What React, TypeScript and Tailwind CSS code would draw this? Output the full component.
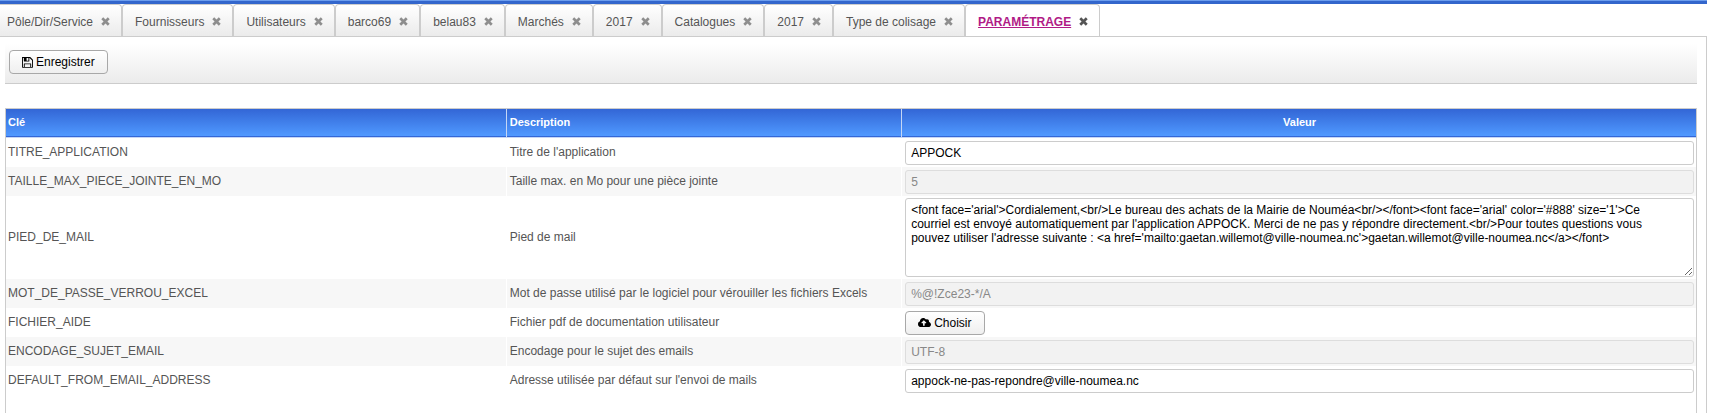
import { FaCloudUploadAlt } from 'react-icons/fa';

type Row = {
  key: string;
  description: string;
  kind: 'text' | 'disabled' | 'area' | 'file';
  value?: string;
};

const tabs = [
  'Pôle/Dir/Service',
  'Fournisseurs',
  'Utilisateurs',
  'barco69',
  'belau83',
  'Marchés',
  '2017',
  'Catalogues',
  '2017',
  'Type de colisage',
];

const footer =
  "<font face='arial'>Cordialement,<br/>Le bureau des achats de la Mairie de Nouméa<br/></font><font face='arial' color='#888' size='1'>Ce courriel est envoyé automatiquement par l'application APPOCK. Merci de ne pas y répondre directement.<br/>Pour toutes questions vous pouvez utiliser l'adresse suivante : <a href='mailto:gaetan.willemot@ville-noumea.nc'>gaetan.willemot@ville-noumea.nc</a></font>";

const rows: Row[] = [
  { key: 'TITRE_APPLICATION', description: "Titre de l'application", kind: 'text', value: 'APPOCK' },
  { key: 'TAILLE_MAX_PIECE_JOINTE_EN_MO', description: 'Taille max. en Mo pour une pièce jointe', kind: 'disabled', value: '5' },
  { key: 'PIED_DE_MAIL', description: 'Pied de mail', kind: 'area', value: footer },
  { key: 'MOT_DE_PASSE_VERROU_EXCEL', description: 'Mot de passe utilisé par le logiciel pour vérouiller les fichiers Excels', kind: 'disabled', value: '%@!Zce23-*/A' },
  { key: 'FICHIER_AIDE', description: 'Fichier pdf de documentation utilisateur', kind: 'file' },
  { key: 'ENCODAGE_SUJET_EMAIL', description: 'Encodage pour le sujet des emails', kind: 'disabled', value: 'UTF-8' },
  { key: 'DEFAULT_FROM_EMAIL_ADDRESS', description: "Adresse utilisée par défaut sur l'envoi de mails", kind: 'text', value: 'appock-ne-pas-repondre@ville-noumea.nc' },
];

const buttonClass =
  'flex h-6 items-center gap-[3px] rounded border border-[#a8a8a8] bg-linear-to-b from-white to-[#efefef] px-3 text-black';

function CloseIcon() {
  return (
    <svg viewBox="0 0 9 9" className="size-[9px] fill-current" aria-hidden="true">
      <path d="M2.2 0.3 4.5 2.5 6.8 0.3 8.7 2.2 6.4 4.5 8.7 6.8 6.8 8.7 4.5 6.5 2.2 8.7 0.3 6.8 2.6 4.5 0.3 2.2Z" />
    </svg>
  );
}

function FloppyIcon() {
  return (
    <svg viewBox="0 128 1536 1536" className="size-[11px] fill-current" aria-hidden="true">
      <path d="M384 1536h768v-384h-768v384zm896 0h128v-896q0-14-10-38.5t-20-34.5l-281-281q-10-10-34-20t-39-10v416q0 40-28 68t-68 28h-576q-40 0-68-28t-28-68v-416h-128v1280h128v-416q0-40 28-68t68-28h832q40 0 68 28t28 68v416zm-384-928v-320q0-13-9.5-22.5t-22.5-9.5h-192q-13 0-22.5 9.5t-9.5 22.5v320q0 13 9.5 22.5t22.5 9.5h192q13 0 22.5-9.5t9.5-22.5zm640 32v896q0 40-28 68t-68 28h-1344q-40 0-68-28t-28-68v-1344q0-40 28-68t68-28h928q40 0 88 20t76 48l280 280q28 28 48 76t20 88z" />
    </svg>
  );
}

function Tab({ label, active = false }: { label: string; active?: boolean }) {
  return (
    <li
      className={
        active
          ? 'flex h-[33px] shrink-0 items-center gap-2 rounded-t border border-b-0 border-[#ccc] bg-white pt-px pr-[11px] pl-3'
          : 'flex h-8 shrink-0 items-center gap-2 rounded-t border border-b-0 border-[#ccc] bg-linear-to-b from-white to-[#ebebeb] pt-[2px] pr-[11px] pl-3'
      }
    >
      <a href="#" className={active ? 'font-bold text-[#b01a86] underline' : 'text-[#555]'}>
        {label}
      </a>
      <button type="button" aria-label={'Fermer ' + label} className={active ? 'text-[#555]' : 'text-[#8e8e8e]'}>
        <CloseIcon />
      </button>
    </li>
  );
}

function Field({ row }: { row: Row }) {
  if (row.kind === 'area') {
    return (
      <textarea
        id={row.key}
        defaultValue={row.value}
        className="block h-[79px] w-full rounded-[3px] border border-[#ccc] bg-white py-1 pr-6 pl-[5px] leading-[14px] text-black"
      />
    );
  }
  if (row.kind === 'file') {
    return (
      <button id={row.key} type="button" className={buttonClass}>
        <FaCloudUploadAlt className="size-[13px]" />
        Choisir
      </button>
    );
  }
  return (
    <input
      id={row.key}
      type="text"
      defaultValue={row.value}
      disabled={row.kind === 'disabled'}
      className="block h-6 w-full rounded-[3px] border border-[#ccc] bg-white px-[5px] pt-px text-black disabled:border-[#ddd] disabled:bg-[#f2f2f2] disabled:text-[#888]"
    />
  );
}

export default function App() {
  return (
    <div className="flex min-h-screen flex-col overflow-hidden bg-white pr-[2px] font-['Liberation_Sans',Arial,sans-serif] text-xs text-[#555]">
      <div className="h-1 border-t border-[#6d9eee] bg-[#3366cc]" />
      <nav className="h-8">
        <ul className="-ml-[6px] flex">
          {tabs.map((label, i) => (
            <Tab key={i} label={label} />
          ))}
          <Tab label="PARAMÉTRAGE" active />
        </ul>
      </nav>
      <main className="flex grow flex-col border-t border-r border-[#ccc] pr-[9px] pl-[5px]">
        <div className="flex h-[47px] items-end border-b border-[#ccc] bg-linear-to-b from-white from-15% to-[#ebebeb] px-1 pb-[9px]">
          <button type="button" className={buttonClass}>
            <FloppyIcon />
            Enregistrer
          </button>
        </div>
        <div className="mt-6 grow border-x border-t border-[#ccc]">
          <table className="w-full table-fixed border-collapse">
            <colgroup>
              <col className="w-[29.6%]" />
              <col className="w-[23.4%]" />
              <col />
            </colgroup>
            <thead>
              <tr className="h-7 border-b border-[#c5d6f5] bg-linear-to-b from-[#3366d6] to-[#5099ff] text-[11px] text-white">
                <th className="px-[2px] text-left">Clé</th>
                <th className="border-l border-[#c5d6f5] pr-[2px] pl-[3px] text-left">Description</th>
                <th className="border-l border-[#c5d6f5] pr-[2px] pl-[3px] text-center">Valeur</th>
              </tr>
            </thead>
            <tbody>
              {rows.map((row) => (
                <tr key={row.key} className="even:bg-[#f7f7f7]">
                  <td className="px-[2px]">
                    <label htmlFor={row.key}>{row.key}</label>
                  </td>
                  <td className="border-l border-white pr-[2px] pl-[3px]">{row.description}</td>
                  <td
                    className={
                      row.kind === 'area'
                        ? 'border-l border-white py-[2px] pr-[2px] pl-[3px]'
                        : 'border-l border-white pt-[3px] pr-[2px] pb-[2px] pl-[3px]'
                    }
                  >
                    <Field row={row} />
                  </td>
                </tr>
              ))}
            </tbody>
          </table>
        </div>
      </main>
    </div>
  );
}
